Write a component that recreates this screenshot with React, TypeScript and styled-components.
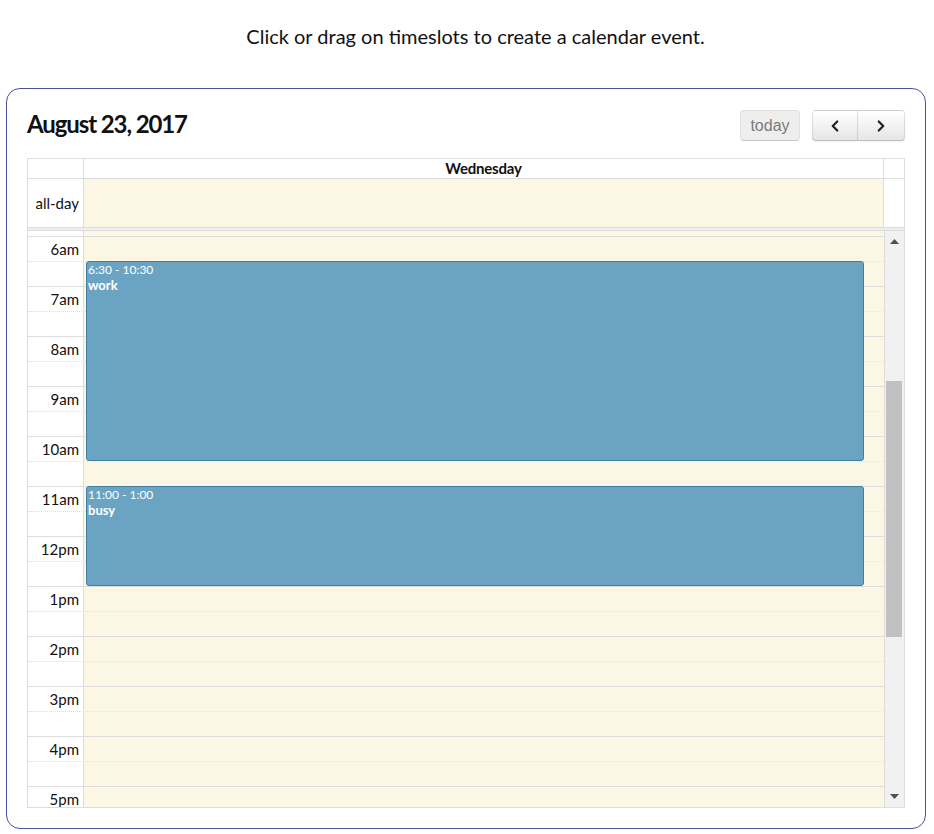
import styled, { createGlobalStyle } from "styled-components";
import { useLayoutEffect, useRef } from "react";
import { ChevronLeft, ChevronRight } from "lucide-react";

const GlobalStyle = createGlobalStyle`
    html, body {
        margin: 0;
        padding: 0;
        background: #fff;
    }
    body {
        font-family: Lato, "Open Sans", sans-serif;
        color: #111;
    }
`

const SLOT_H = 25;
const AXIS_W = 56;

const Page = styled.div`
    padding: 24px 8px 6px 6px;
`

const Hint = styled.p`
    margin: 0 0 40px;
    padding-left: 19px;
    text-align: center;
    font-size: 20px;
    line-height: 24px;
`

const Card = styled.div`
    border: 1px solid #4a4f98;
    border-radius: 14px;
    padding: 21px 20px 20px 20px;
`

const Toolbar = styled.div`
    display: flex;
    align-items: center;
    justify-content: space-between;
    margin-bottom: 17px;
    h2 {
        margin: 0;
        font-size: 24px;
        line-height: 28px;
        font-weight: 700;
        letter-spacing: -1.1px;
        position: relative;
        top: -2px;
    }
`

const Buttons = styled.div`
    display: flex;
    gap: 12px;
`

const Group = styled.div`
    display: flex;
`

const Button = styled.button<{ $w: number; $pos?: "left" | "right" }>`
    width: ${(p) => p.$w}px;
    height: 31px;
    padding: 0;
    display: flex;
    align-items: center;
    justify-content: center;
    font-family: "Liberation Sans", Arial, sans-serif;
    font-size: 16px;
    color: #333;
    background: linear-gradient(to bottom, #fff, #e6e6e6);
    border: 1px solid;
    border-color: rgba(0,0,0,.1) rgba(0,0,0,.1) rgba(0,0,0,.25);
    border-radius: ${(p) => p.$pos === "left" ? "4px 0 0 4px" : p.$pos === "right" ? "0 4px 4px 0" : "4px"};
    ${(p) => p.$pos === "right" ? "border-left: none;" : ""}
    box-shadow: inset 0 1px 0 rgba(255,255,255,.2), 0 1px 2px rgba(0,0,0,.05);
    &:disabled {
        opacity: .65;
        box-shadow: none;
        background: #e6e6e6;
    }
`

const Table = styled.div`
    border: 1px solid #ddd;
`

const HeadRow = styled.div`
    display: grid;
    grid-template-columns: ${AXIS_W - 1}px 1fr 21px;
    height: 19px;
    border-bottom: 1px solid #ddd;
`

const Cell = styled.div<{ $today?: boolean; $line?: boolean }>`
    background: ${(p) => p.$today ? "#fcf7e4" : "#fff"};
    border-left: ${(p) => p.$line ? "1px solid #ddd" : "none"};
`

const DayName = styled(Cell)`
    text-align: center;
    font-size: 15px;
    font-weight: 700;
    line-height: 19px;
    letter-spacing: -0.2px;
`

const AllDayRow = styled(HeadRow)`
    height: 48px;
    border-bottom: none;
`

const AxisLabel = styled.div`
    display: flex;
    align-items: center;
    justify-content: flex-end;
    padding-right: 4px;
    font-size: 15px;
`

const Divider = styled.div`
    height: 2px;
    background: #eee;
    border-top: 1px solid #ddd;
    border-bottom: 1px solid #ddd;
`

const Body = styled.div`
    display: flex;
    height: 576px;
`

const Scroller = styled.div`
    flex: 1;
    overflow: hidden;
`

const Slats = styled.div`
    position: relative;
`

const Slot = styled.div<{ $minor: boolean }>`
    display: grid;
    grid-template-columns: ${AXIS_W}px 1fr;
    height: ${SLOT_H}px;
    box-sizing: border-box;
    border-top: 1px ${(p) => p.$minor ? "dotted" : "solid"} #ddd;
`

const SlotAxis = styled.div`
    border-right: 1px solid #ddd;
    text-align: right;
    padding-right: 4px;
    font-size: 15px;
    line-height: 24px;
    background: #fff;
`

const SlotDay = styled.div`
    background: #fcf7e4;
`

const EventLayer = styled.div`
    position: absolute;
    top: 0;
    bottom: 0;
    left: ${AXIS_W}px;
    right: 0;
`

const Event = styled.div`
    position: absolute;
    left: 2px;
    right: 20px;
    box-sizing: border-box;
    background: #6aa4c2;
    border: 1px solid #3f7fa2;
    border-radius: 3px;
    color: #fff;
    padding: 0 1px;
    overflow: hidden;
    .time {
        font-size: 12px;
        line-height: 15px;
        margin-top: 0;
    }
    .title {
        font-size: 13px;
        font-weight: 700;
        line-height: 16px;
    }
`

const ScrollBar = styled.div`
    width: 20px;
    border-left: 1px solid #ddd;
    background: #f1f1f1;
    position: relative;
    display: flex;
    flex-direction: column;
    align-items: center;
    justify-content: space-between;
    padding: 8px 0 8px;
    box-sizing: border-box;
    svg {
        display: block;
    }
`

const Thumb = styled.div`
    position: absolute;
    left: 1px;
    right: 2px;
    top: 150px;
    height: 256px;
    background: #c1c1c1;
`

const hourLabel = (h: number) => {
    const suffix = h < 12 ? "am" : "pm";
    const n = h % 12 === 0 ? 12 : h % 12;
    return `${n}${suffix}`;
}

const events = [
    { start: 6.5, end: 10.5, time: "6:30 - 10:30", title: "work" },
    { start: 11, end: 13, time: "11:00 - 1:00", title: "busy" },
];

function App() {
    const scroller = useRef<HTMLDivElement>(null);
    useLayoutEffect(() => {
        if (scroller.current) scroller.current.scrollTop = 12 * SLOT_H - 5;
    }, []);

    const slots = [];
    for (let i = 0; i < 48; i++) {
        const minor = i % 2 === 1;
        slots.push(
            <Slot key={i} $minor={minor}>
                <SlotAxis>{minor ? "" : hourLabel(i / 2)}</SlotAxis>
                <SlotDay />
            </Slot>
        );
    }

    return (
        <Page>
            <GlobalStyle />
            <Hint>Click or drag on timeslots to create a calendar event.</Hint>
            <Card>
                <Toolbar>
                    <h2>August 23, 2017</h2>
                    <Buttons>
                        <Button $w={60} disabled>today</Button>
                        <Group>
                            <Button $w={46} $pos="left"><ChevronLeft size={18} strokeWidth={3} color="#222" /></Button>
                            <Button $w={47} $pos="right"><ChevronRight size={18} strokeWidth={3} color="#222" /></Button>
                        </Group>
                    </Buttons>
                </Toolbar>
                <Table>
                    <HeadRow>
                        <Cell />
                        <DayName $line>Wednesday</DayName>
                        <Cell $line />
                    </HeadRow>
                    <AllDayRow>
                        <AxisLabel>all-day</AxisLabel>
                        <Cell $today $line />
                        <Cell $line />
                    </AllDayRow>
                    <Divider />
                    <Body>
                        <Scroller ref={scroller}>
                            <Slats>
                                {slots}
                                <EventLayer>
                                    {events.map((ev) => (
                                        <Event
                                            key={ev.title}
                                            style={{ top: ev.start * 2 * SLOT_H, height: (ev.end - ev.start) * 2 * SLOT_H }}
                                        >
                                            <div className="time">{ev.time}</div>
                                            <div className="title">{ev.title}</div>
                                        </Event>
                                    ))}
                                </EventLayer>
                            </Slats>
                        </Scroller>
                        <ScrollBar>
                            <svg width="9" height="5" viewBox="0 0 9 5"><path d="M0 5 L4.5 0 L9 5 Z" fill="#505050" /></svg>
                            <Thumb />
                            <svg width="9" height="5" viewBox="0 0 9 5"><path d="M0 0 L4.5 5 L9 0 Z" fill="#505050" /></svg>
                        </ScrollBar>
                    </Body>
                </Table>
            </Card>
        </Page>
    );
}

export default App;
